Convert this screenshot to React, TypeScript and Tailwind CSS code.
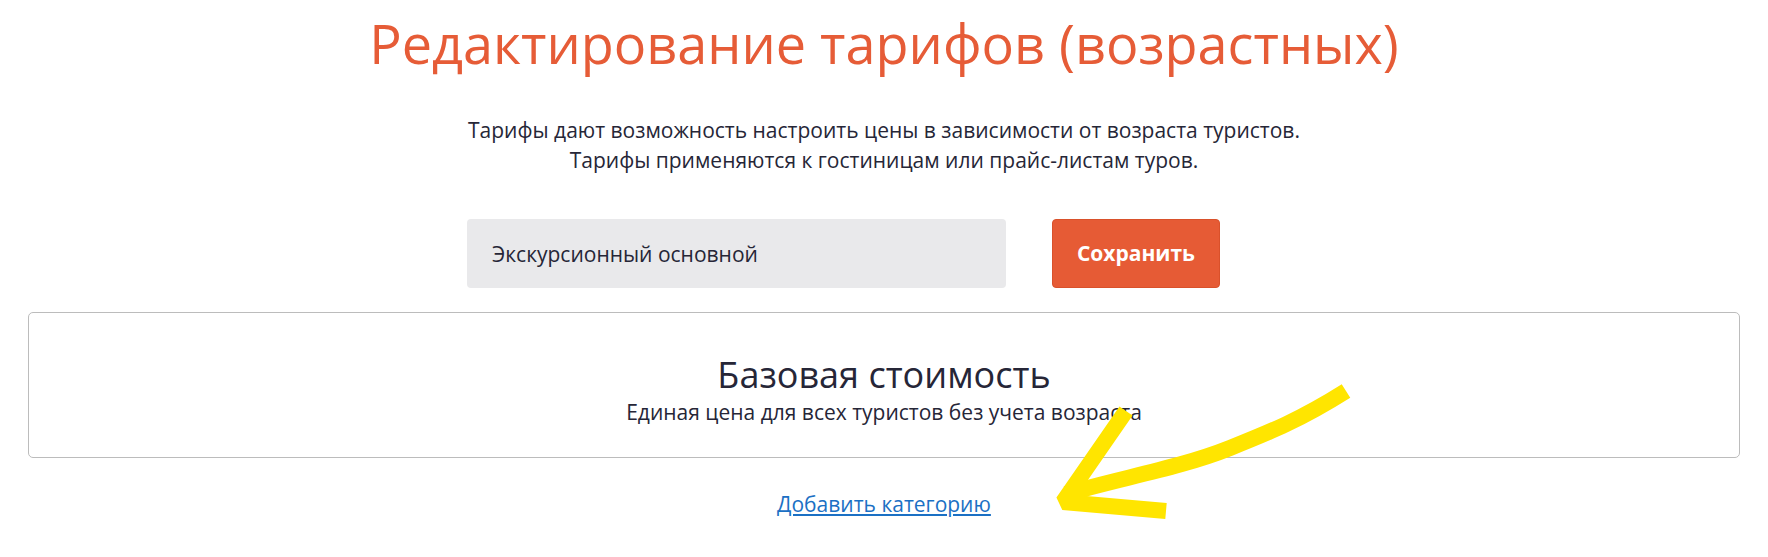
import { useState } from 'react';

// Highlighter-style arrow drawn over the page, pointing at the "add category" link
function MarkerArrow() {
  return (
    <svg
      className="pointer-events-none absolute left-0 top-0"
      width="1768"
      height="557"
      viewBox="0 0 1768 557"
      fill="none"
    >
      <path
        d="M1346 391 C1300 420 1270 432 1230 448 C1180 468 1120 478 1066 494"
        stroke="#ffe500"
        strokeWidth="16"
        strokeLinecap="butt"
      />
      <path
        d="M1126 411 L1063 502 L1166 511"
        stroke="#ffe500"
        strokeWidth="16"
        strokeLinecap="butt"
        strokeLinejoin="bevel"
      />
    </svg>
  );
}

export default function App() {
  const [name, setName] = useState('Экскурсионный основной');

  return (
    <div className="relative min-h-[557px] w-full bg-white font-['Open_Sans',sans-serif] text-[#262637]">
      <h1 className="pt-[11px] text-center text-[54px] font-normal leading-[64px] text-[#e65c37]">
        Редактирование тарифов (возрастных)
      </h1>

      <p className="mt-[40px] text-center text-[21px] leading-[30px]">
        Тарифы дают возможность настроить цены в зависимости от возраста туристов.
        <br />
        Тарифы применяются к гостиницам или прайс-листам туров.
      </p>

      <div className="mx-auto mt-[44px] flex w-[834px] gap-[46px]">
        <input
          value={name}
          onChange={(e) => setName(e.target.value)}
          className="h-[69px] w-[539px] rounded-[4px] bg-[#e9e9eb] px-[25px] text-[21px] text-[#262637] outline-none"
        />
        <button className="h-[69px] w-[168px] rounded-[4px] border border-[#d9512b] bg-[#e65b35] text-[21px] font-bold text-white">
          Сохранить
        </button>
      </div>

      <div className="mx-[28px] mt-[24px] h-[146px] rounded-[5px] border border-[#bcbcbc] pt-[41px] text-center">
        <h2 className="text-[36px] font-normal leading-[42px]">Базовая стоимость</h2>
        <p className="mt-[2px] text-[21px] leading-[28px]">
          Единая цена для всех туристов без учета возраста
        </p>
      </div>

      <div className="mt-[32px] text-center">
        <a
          href="#"
          className="text-[21px] leading-[28px] text-[#1b70c4] underline decoration-2 underline-offset-[2px]"
        >
          Добавить категорию
        </a>
      </div>

      <MarkerArrow />
    </div>
  );
}
